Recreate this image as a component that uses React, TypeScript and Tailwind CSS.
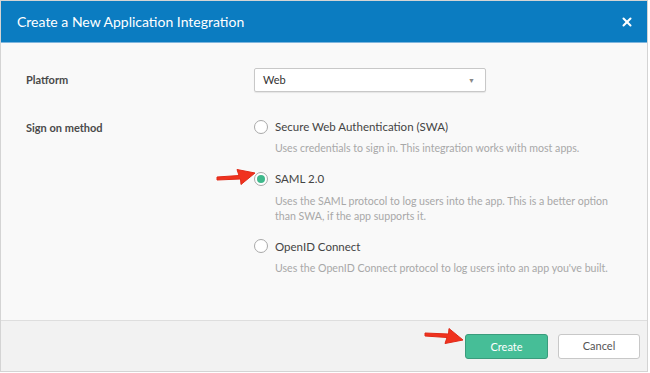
import { X } from "lucide-react";

function Arrow({ className }: { className?: string }) {
    return (
        <svg className={className} width="40" height="18" viewBox="0 0 40 18">
            <path d="M1 9 L23 7.5 L21 1.5 L39 5 L25 16.5 L24.5 11 L1 12 Z" fill="#f0321e" stroke="#e02a18" strokeWidth="1" strokeLinejoin="round" />
        </svg>
    );
}

function Radio({ checked }: { checked?: boolean }) {
    return (
        <span className="w-[14px] h-[14px] rounded-full border border-[#a9a9a9] bg-white flex items-center justify-center shrink-0">
            {checked && <span className="w-[8px] h-[8px] rounded-full bg-[#3fb98c]"></span>}
        </span>
    );
}

const options = [
    { id: "swa", title: "Secure Web Authentication (SWA)", desc: ["Uses credentials to sign in. This integration works with most apps."] },
    { id: "saml", title: "SAML 2.0", desc: ["Uses the SAML protocol to log users into the app. This is a better option", "than SWA, if the app supports it."], checked: true },
    { id: "oidc", title: "OpenID Connect", desc: ["Uses the OpenID Connect protocol to log users into an app you've built."] },
];

export default function App() {
    return (
        <div className="w-[650px] h-[373px] bg-white" style={{ fontFamily: "Lato, 'Open Sans', sans-serif" }}>
            <div className="w-[648px] h-[372px] border border-[#d4d4d4] flex flex-col">
                <div className="h-[42px] bg-[#0b7cc1] border-b border-[#7fb6de] flex items-center justify-between pl-[16px] pr-[13px] shrink-0">
                    <h1 className="text-white text-[14px] font-normal">Create a New Application Integration</h1>
                    <X className="text-white w-[14px] h-[14px]" strokeWidth={3.5} />
                </div>
                <div className="flex-1 bg-[#f9f9f9] pl-[25px] pt-[25px]">
                    <div className="flex items-center">
                        <div className="w-[228px] text-[11px] font-bold text-[#4a4a4a]">Platform</div>
                        <div className="w-[232px] h-[24px] bg-white border border-[#c8c8c8] rounded-[2px] shadow-[0_1px_1px_rgba(0,0,0,0.08)] flex items-center justify-between pl-[8px] pr-[10px]">
                            <span className="text-[11px] text-[#333]">Web</span>
                            <span className="text-[7px] text-[#888]">▼</span>
                        </div>
                    </div>
                    <div className="flex mt-[26px]">
                        <div className="w-[228px] text-[11px] font-bold text-[#4a4a4a] pt-[2px]">Sign on method</div>
                        <div className="flex flex-col gap-[14px]">
                            {options.map((o) => (
                                <div key={o.id} className="relative">
                                    {o.checked && <Arrow className="absolute left-[-38px] top-[-2px]" />}
                                    <div className="flex items-center gap-[7px]">
                                        <Radio checked={o.checked} />
                                        <span className="text-[11.5px] text-[#444]">{o.title}</span>
                                    </div>
                                    <div className="pl-[21px] mt-[6px] text-[10.6px] leading-[15px] text-[#a8a8a8]">
                                        {o.desc.map((d) => (
                                            <div key={d}>{d}</div>
                                        ))}
                                    </div>
                                </div>
                            ))}
                        </div>
                    </div>
                </div>
                <div className="h-[51px] bg-[#f2f2f2] border-t border-[#dedede] flex items-center justify-end pr-[7px] gap-[10px] shrink-0">
                    <div className="relative">
                        <Arrow className="absolute left-[-41px] top-[-6px] -scale-y-100" />
                        <button className="w-[83px] h-[25px] rounded-[3px] bg-[#46be97] border border-[#3a9c7c] text-white text-[11px]">Create</button>
                    </div>
                    <button className="w-[82px] h-[25px] rounded-[3px] bg-white border border-[#c8c8c8] text-[#555] text-[11px]">Cancel</button>
                </div>
            </div>
        </div>
    );
}
